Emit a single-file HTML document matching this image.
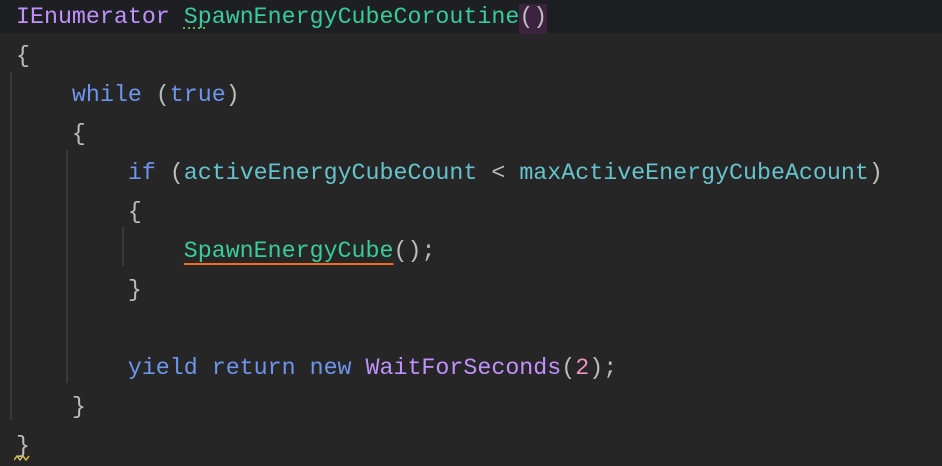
<!DOCTYPE html>
<html><head><style>
html,body{margin:0;padding:0;width:942px;height:466px;overflow:hidden;background:#262626;}
.code{position:absolute;left:16px;top:-2px;font-family:"Liberation Mono",monospace;font-size:23.3px;line-height:39px;color:#bdbdbd;white-space:pre;}
.top{position:absolute;left:0;top:0;width:942px;height:33px;background:#1e1f22;}
.k{color:#6c95eb}.t{color:#c191ff}.m{color:#39cc9b}.f{color:#66c3cc}.n{color:#ed94c0}
.g{position:absolute;width:2px;background:#3a3a3a}
.hl{background:#3b2340;padding-bottom:4px}
.err{text-decoration:underline;text-decoration-color:#f26d1b;text-underline-offset:6px;text-decoration-thickness:2px}
</style></head><body>
<div class="top"></div>
<div class="g" style="left:10px;top:72px;height:348px"></div>
<div class="g" style="left:66px;top:150px;height:233px"></div>
<div class="g" style="left:122px;top:227px;height:39px"></div>
<div class="code"><span class="t">IEnumerator</span> <span class="m">SpawnEnergyCubeCoroutine</span><span class="hl">()</span>
{
    <span class="k">while</span> (<span class="k">true</span>)
    {
        <span class="k">if</span> (<span class="f">activeEnergyCubeCount</span> &lt; <span class="f">maxActiveEnergyCubeAcount</span>)
        {
            <span class="m err">SpawnEnergyCube</span>();
        }

        <span class="k">yield return new</span> <span class="t">WaitForSeconds</span>(<span class="n">2</span>);
    }
}</div>
<svg style="position:absolute;left:183px;top:26px" width="28" height="4"><path d="M0 2 h2 M5 2 h2 M10 2 h2 M15 2 h2 M20 2 h2" stroke="#5fb34a" stroke-width="2"/></svg>
<svg style="position:absolute;left:14px;top:455px" width="16" height="6"><path d="M0 5 L3 1 L6 5 L9 1 L12 5 L15 1" stroke="#d6b64a" stroke-width="1.5" fill="none"/></svg>
</body></html>
